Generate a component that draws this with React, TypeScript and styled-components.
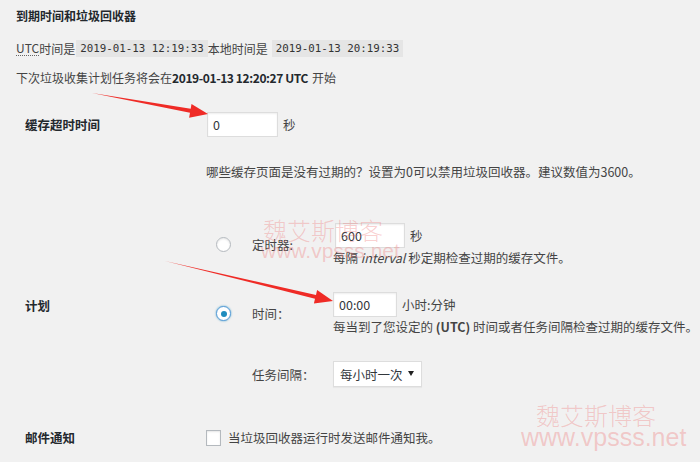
import styled, { createGlobalStyle } from 'styled-components';

const GlobalStyle = createGlobalStyle`
  html, body {
    margin: 0;
    padding: 0;
    background: #f1f1f1;
  }
  body {
    font-family: "Noto Sans CJK SC", sans-serif;
    font-size: 12.5px;
    color: #444;
  }
`;

const Page = styled.div`
  position: relative;
  width: 700px;
  height: 462px;
  overflow: hidden;
  padding: 0 16px;
  box-sizing: border-box;
`;

const Title = styled.div`
  margin-top: 6px;
  line-height: 20px;
  font-size: 12px;
  font-weight: bold;
  color: #23282d;
`;

const InfoLine = styled.div<{ $gap: number }>`
  display: flex;
  align-items: center;
  height: 20px;
  margin-top: ${(p) => p.$gap}px;
  white-space: nowrap;
  font-size: 12px;
`;

const Abbr = styled.span`
  border-bottom: 1px dotted #666;
  line-height: 14px;
`;

const Code = styled.code<{ $ml?: number }>`
  font-family: "DejaVu Sans Mono", monospace;
  font-size: 10.8px;
  background: #e5e5e5;
  height: 17px;
  line-height: 17px;
  padding: 0 4px;
  margin-left: ${(p) => p.$ml ?? 0}px;
  color: #333;
`;

const Strong = styled.strong`
  color: #23282d;
  margin-right: 4px;
  letter-spacing: -0.4px;
`;

const FormTable = styled.div`
  display: grid;
  grid-template-columns: 190px 1fr;
  margin-top: 25px;
`;

const Th = styled.div<{ $top: number; $align: 'start' | 'center' }>`
  align-self: ${(p) => p.$align};
  margin-top: ${(p) => p.$top}px;
  padding-left: 9px;
  line-height: 25px;
  font-weight: bold;
  color: #23282d;
`;

const Td = styled.div<{ $top: number }>`
  margin-top: ${(p) => p.$top}px;
`;

const InputLine = styled.div`
  display: flex;
  align-items: center;
  gap: 5px;
  height: 25px;
`;

const TextInput = styled.div<{ $w: number; $ml?: number }>`
  box-sizing: border-box;
  width: ${(p) => p.$w}px;
  height: 25px;
  margin-left: ${(p) => p.$ml ?? 0}px;
  padding: 0 5px;
  background: #fff;
  border: 1px solid #ddd;
  box-shadow: inset 0 1px 2px rgba(0, 0, 0, 0.07);
  display: flex;
  align-items: center;
  color: #32373c;
`;

const Description = styled.p<{ $top: number }>`
  margin: ${(p) => p.$top}px 0 0;
  line-height: 16px;
  white-space: nowrap;
`;

const Options = styled.div`
  display: grid;
  grid-template-columns: 46px 81px 1fr;
  row-gap: 26px;
  align-items: center;
`;

const Radio = styled.span<{ $checked?: boolean }>`
  box-sizing: border-box;
  width: 15px;
  height: 15px;
  margin-left: 10px;
  border-radius: 50%;
  background: #fff;
  border: 1px solid ${(p) => (p.$checked ? '#5b9dd9' : '#b4b9be')};
  box-shadow: ${(p) =>
    p.$checked
      ? '0 0 2px rgba(30, 140, 190, 0.8)'
      : 'inset 0 1px 2px rgba(0, 0, 0, 0.1)'};
  display: flex;
  align-items: center;
  justify-content: center;

  &::after {
    content: '';
    display: ${(p) => (p.$checked ? 'block' : 'none')};
    width: 6px;
    height: 6px;
    border-radius: 50%;
    background: #1e8cbe;
  }
`;

const OptionLabel = styled.span`
  white-space: nowrap;
`;

const Select = styled.div`
  box-sizing: border-box;
  width: 89px;
  height: 26px;
  padding: 0 7px 0 6px;
  background: #fff;
  border: 1px solid #ddd;
  box-shadow: 0 1px 1px rgba(0, 0, 0, 0.04);
  display: flex;
  align-items: center;
  justify-content: space-between;
  color: #32373c;
`;

const Caret = styled.span`
  width: 0;
  height: 0;
  border-left: 3px solid transparent;
  border-right: 3px solid transparent;
  border-top: 5px solid #222;
  margin-top: -2px;
`;

const CheckLine = styled.label`
  display: flex;
  align-items: center;
  gap: 7px;
  height: 25px;
`;

const Checkbox = styled.span`
  box-sizing: border-box;
  width: 15px;
  height: 16px;
  background: #fff;
  border: 1px solid #b4b9be;
  box-shadow: inset 0 1px 2px rgba(0, 0, 0, 0.1);
`;

const Watermark = styled.div<{ $top: number; $left: number }>`
  position: absolute;
  top: ${(p) => p.$top}px;
  left: ${(p) => p.$left}px;
  color: rgba(238, 110, 110, 0.33);
  pointer-events: none;
  line-height: 1;
`;

const MarkName = styled.div<{ $size: number; $indent: number }>`
  font-size: ${(p) => p.$size}px;
  margin-left: ${(p) => p.$indent}px;
  font-weight: 300;
`;

const MarkSite = styled.div<{ $size: number }>`
  font-family: "Liberation Sans", sans-serif;
  font-size: ${(p) => p.$size}px;
  margin-top: -2px;
`;

const Arrows = styled.svg`
  position: absolute;
  left: 0;
  top: 0;
  pointer-events: none;
`;

export default function App() {
  return (
    <>
      <GlobalStyle />
      <Page>
        <Title>到期时间和垃圾回收器</Title>
        <InfoLine $gap={12}>
          <Abbr>UTC</Abbr>时间是
          <Code $ml={1}>2019-01-13 12:19:33</Code>
          本地时间是
          <Code $ml={4}>2019-01-13 20:19:33</Code>
        </InfoLine>
        <InfoLine $gap={9}>
          下次垃圾收集计划任务将会在<Strong>2019-01-13 12:20:27 UTC</Strong>开始
        </InfoLine>

        <FormTable>
          <Th $top={0} $align="start">缓存超时时间</Th>
          <Td $top={0}>
            <InputLine>
              <TextInput $w={71} $ml={1}>0</TextInput>
              秒
            </InputLine>
            <Description $top={27}>
              哪些缓存页面是没有过期的？设置为0可以禁用垃圾回收器。建议数值为3600。
            </Description>
          </Td>

          <Th $top={43} $align="center">计划</Th>
          <Td $top={43}>
            <Options>
              <Radio />
              <OptionLabel>定时器:</OptionLabel>
              <div>
                <InputLine>
                  <TextInput $w={70} $ml={2}>600</TextInput>
                  秒
                </InputLine>
                <Description $top={2}>
                  每隔 <i>interval</i> 秒定期检查过期的缓存文件。
                </Description>
              </div>

              <Radio $checked />
              <OptionLabel>时间：</OptionLabel>
              <div>
                <InputLine>
                  <TextInput $w={64}>00:00</TextInput>
                  小时:分钟
                </InputLine>
                <Description $top={2}>
                  每当到了您设定的 <b>(UTC)</b> 时间或者任务间隔检查过期的缓存文件。
                </Description>
              </div>

              <span />
              <OptionLabel>任务间隔：</OptionLabel>
              <div>
                <Select>
                  每小时一次
                  <Caret />
                </Select>
              </div>
            </Options>
          </Td>

          <Th $top={38} $align="center">邮件通知</Th>
          <Td $top={38}>
            <CheckLine>
              <Checkbox />
              当垃圾回收器运行时发送邮件通知我。
            </CheckLine>
          </Td>
        </FormTable>

        <Watermark $top={218} $left={261}>
          <MarkName $size={24} $indent={2}>魏艾斯博客</MarkName>
          <MarkSite $size={21}>www.vpsss.net</MarkSite>
        </Watermark>
        <Watermark $top={403} $left={521}>
          <MarkName $size={24} $indent={15}>魏艾斯博客</MarkName>
          <MarkSite $size={25}>www.vpsss.net</MarkSite>
        </Watermark>

        <Arrows width={700} height={462} viewBox="0 0 700 462">
          <polygon
            fill="#ef2b26"
            points="92,93 190.7,108.8 191.5,103.9 208,114 189.1,117.7 190,112.8"
          />
          <polygon
            fill="#ef2b26"
            points="165,261 316,294.9 317.1,290 333,301 313.9,303.6 315,298.7"
          />
        </Arrows>
      </Page>
    </>
  );
}
